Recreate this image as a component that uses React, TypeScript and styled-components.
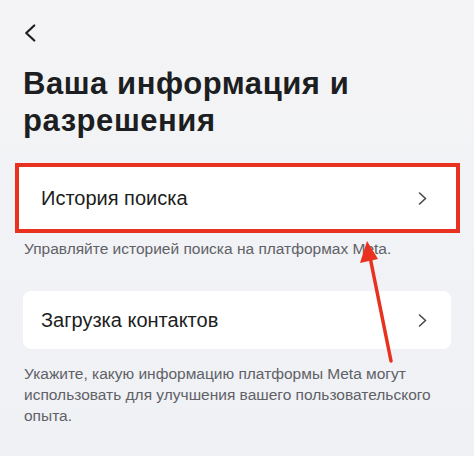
import React from "react";
import styled, { createGlobalStyle } from "styled-components";

const GlobalStyle = createGlobalStyle`
  html, body {
    margin: 0;
    padding: 0;
    background: #f1f2f5;
  }
  body {
    font-family: "Liberation Sans", Arial, sans-serif;
    -webkit-font-smoothing: antialiased;
  }
`;

const Page = styled.div`
  position: relative;
  width: 474px;
  height: 456px;
  box-sizing: border-box;
  padding: 0 23px;
  background: linear-gradient(#f4f4f6, #eff1f5);
  overflow: hidden;
`;

const TopBar = styled.div`
  height: 65px;
  display: flex;
  align-items: flex-start;
  padding-top: 24px;
  box-sizing: border-box;
`;

const Title = styled.h1`
  margin: 0 0 24px;
  font-size: 31px;
  line-height: 37px;
  font-weight: 700;
  color: #1c1e21;
  letter-spacing: 0.55px;
`;

const Card = styled.div<{ $highlighted?: boolean }>`
  display: flex;
  align-items: center;
  justify-content: space-between;
  background: #ffffff;
  border-radius: ${(p) => (p.$highlighted ? "0" : "8px")};
  height: ${(p) => (p.$highlighted ? "62px" : "58px")};
  padding: ${(p) => (p.$highlighted ? "0 29px 0 22px" : "0 24px 0 18px")};
  margin: ${(p) => (p.$highlighted ? "0 -9px 0 -8px" : "0")};
  border: ${(p) => (p.$highlighted ? "4px solid #e8321f" : "none")};
  font-size: 20px;
  color: #1c1e21;
`;

const Caption = styled.p<{ $top: number; $bottom: number }>`
  margin: ${(p) => p.$top}px 0 ${(p) => p.$bottom}px 1px;
  font-size: 15.5px;
  line-height: 21px;
  color: #5f6167;
`;

const Annotation = styled.svg`
  position: absolute;
  left: 0;
  top: 0;
  pointer-events: none;
`;

const Chevron = ({ dir, size }: { dir: "left" | "right"; size: number }) =>
  dir === "left" ? (
    <svg width={size * 0.75} height={size} viewBox="0 0 13 18" fill="none">
      <path d="M11 1.5 L3 9 L11 16.5" stroke="#1c1e21" strokeWidth="2.2" strokeLinecap="round" strokeLinejoin="round" />
    </svg>
  ) : (
    <svg width={size * 0.7} height={size} viewBox="0 0 9 13" fill="none">
      <path d="M1.5 1 L7.5 6.5 L1.5 12" stroke="#45474c" strokeWidth="1.6" strokeLinecap="round" strokeLinejoin="round" />
    </svg>
  );

const App: React.FC = () => (
  <>
    <GlobalStyle />
    <Page>
      <TopBar>
        <Chevron dir="left" size={18} />
      </TopBar>
      <Title>
        Ваша информация и
        <br />
        разрешения
      </Title>
      <Card $highlighted>
        <span>История поиска</span>
        <Chevron dir="right" size={13} />
      </Card>
      <Caption $top={5} $bottom={32}>
        Управляйте историей поиска на платформах Meta.
      </Caption>
      <Card>
        <span>Загрузка контактов</span>
        <Chevron dir="right" size={13} />
      </Card>
      <Caption $top={14} $bottom={0}>
        Укажите, какую информацию платформы Meta могут использовать для улучшения вашего пользовательского опыта.
      </Caption>
      <Annotation width="474" height="456" viewBox="0 0 474 456">
        <line x1="391" y1="361" x2="370" y2="257" stroke="#e8321f" strokeWidth="3.5" strokeLinecap="round" />
        <polygon points="367,241 360,263 378,259" fill="#e8321f" />
      </Annotation>
    </Page>
  </>
);

export default App;
